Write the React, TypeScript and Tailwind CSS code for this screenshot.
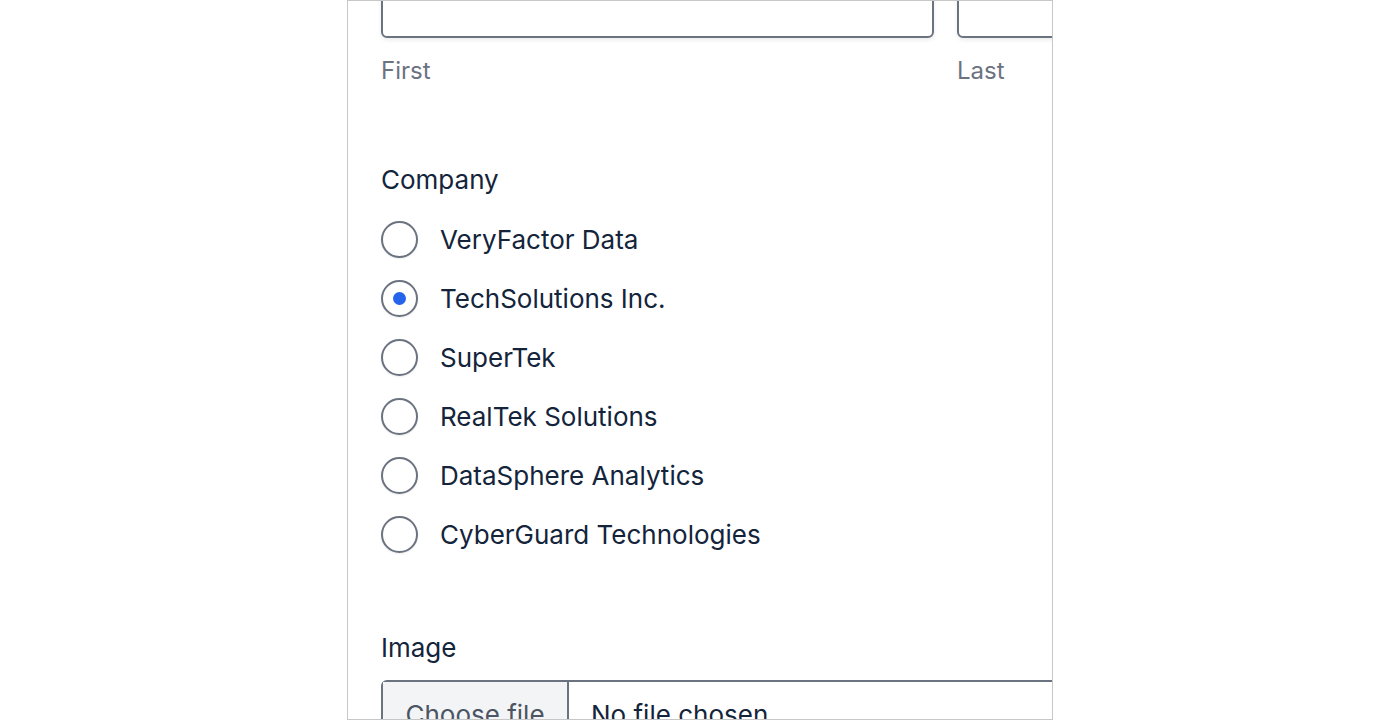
import React from "react";

const companies = [
  "VeryFactor Data",
  "TechSolutions Inc.",
  "SuperTek",
  "RealTek Solutions",
  "DataSphere Analytics",
  "CyberGuard Technologies",
];

function Radio({ checked }: { checked?: boolean }) {
  return (
    <span className="flex h-[37px] w-[37px] shrink-0 items-center justify-center rounded-full border-2 border-[#6b7280] bg-white shadow-[0_1px_2px_rgba(0,0,0,0.08)]">
      {checked && <span className="h-[13px] w-[13px] rounded-full bg-[#2563eb]" />}
    </span>
  );
}

export default function App() {
  return (
    <div
      className="flex h-[720px] w-[1400px] justify-center bg-white"
      style={{ fontFamily: "Inter, 'Open Sans', sans-serif" }}
    >
      <div className="h-[720px] w-[706px] overflow-hidden border border-[#c7c7c7] bg-white">
        <div className="-mt-[40px] w-[1200px] pl-[33px]">
          <div className="grid grid-cols-[553px_553px] gap-x-[23px]">
            <div>
              <div className="h-[77px] rounded-[6px] border-2 border-[#6b7280] bg-white shadow-[0_2px_4px_rgba(0,0,0,0.08)]" />
              <div className="mt-[17px] text-[24px] leading-[32px] text-[#6b7280]">First</div>
            </div>
            <div>
              <div className="h-[77px] rounded-[6px] border-2 border-[#6b7280] bg-white shadow-[0_2px_4px_rgba(0,0,0,0.08)]" />
              <div className="mt-[17px] text-[24px] leading-[32px] text-[#6b7280]">Last</div>
            </div>
          </div>

          <div className="mt-[75px] text-[26px] leading-[36px] text-[#13243b]">Company</div>
          <div className="mt-[23px] flex flex-col gap-[22px]">
            {companies.map((c, i) => (
              <label key={c} className="flex h-[37px] items-center gap-[22px]">
                <Radio checked={i === 1} />
                <span className="text-[26px] leading-[36px] text-[#13243b]">{c}</span>
              </label>
            ))}
          </div>

          <div className="mt-[77px] text-[26px] leading-[36px] text-[#13243b]">Image</div>
          <div className="mt-[14px] flex h-[70px] w-[700px] rounded-t-[6px] border-2 border-[#6b7280] bg-white">
            <div className="flex w-[186px] justify-center border-r-2 border-[#6b7280] bg-[#f3f4f6] pt-[15px] text-[26px] leading-[36px] text-[#4b5563]">
              Choose file
            </div>
            <div className="pl-[22px] pt-[15px] text-[26px] leading-[36px] text-[#13243b]">No file chosen</div>
          </div>
        </div>
      </div>
    </div>
  );
}
